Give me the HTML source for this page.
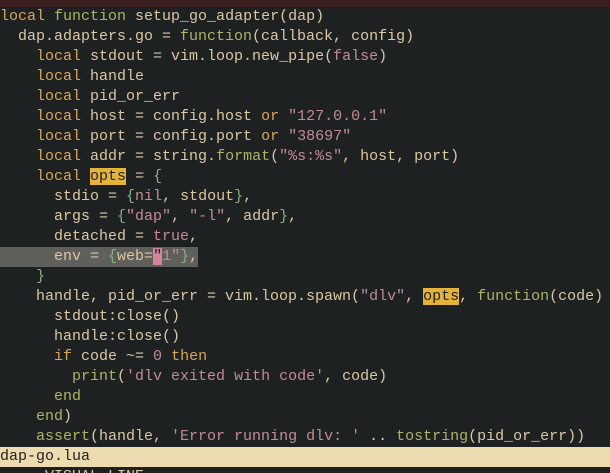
<!DOCTYPE html>
<html><head><meta charset="utf-8"><style>
html,body{margin:0;padding:0;width:610px;height:473px;overflow:hidden;background:#1e2122;}
.top{height:7px;background:#3b1f1f;}
pre{margin:0;font-family:"Liberation Mono",monospace;font-size:15px;line-height:20px;color:#ddc7a1;}
.l{height:20px;white-space:pre;}
.k{color:#d8a657}.f{color:#a9b665}.s{color:#c68a93}.g{color:#89b482}
.hl{background:#e5b33a;color:#1e2122}
.sel{background:#5f5f5b;display:inline-block}
.cur{background:#d3869b;color:#1e2122}
.st{background:#ecdcb0;color:#1e2122;height:20px;}
.bot{color:#ddc7a1}
</style></head><body>
<div class="top"></div>
<pre><div class="l"><span class="k">local</span> <span class="f">function</span> setup_go_adapter(dap)</div><div class="l">  dap.adapters.go = <span class="f">function</span>(callback, config)</div><div class="l">    <span class="k">local</span> stdout = vim.loop.new_pipe(<span class="s">false</span>)</div><div class="l">    <span class="k">local</span> handle</div><div class="l">    <span class="k">local</span> pid_or_err</div><div class="l">    <span class="k">local</span> host = config.host <span class="k">or</span> <span class="s">"127.0.0.1"</span></div><div class="l">    <span class="k">local</span> port = config.port <span class="k">or</span> <span class="s">"38697"</span></div><div class="l">    <span class="k">local</span> addr = string.<span class="f">format</span>(<span class="s">"%s:%s"</span>, host, port)</div><div class="l">    <span class="k">local</span> <span class="hl">opts</span> = <span class="g">{</span></div><div class="l">      stdio = <span class="g">{</span><span class="s">nil</span>, stdout<span class="g">}</span>,</div><div class="l">      args = <span class="g">{</span><span class="s">"dap"</span>, <span class="s">"-l"</span>, addr<span class="g">}</span>,</div><div class="l">      detached = <span class="s">true</span>,</div><div class="l"><span class="sel">      env = <span class="g">{</span>web=<span class="cur">"</span><span class="s">1"</span><span class="g">}</span>,</span></div><div class="l">    <span class="g">}</span></div><div class="l">    handle, pid_or_err = vim.loop.spawn(<span class="s">"dlv"</span>, <span class="hl">opts</span>, <span class="f">function</span>(code)</div><div class="l">      stdout:close()</div><div class="l">      handle:close()</div><div class="l">      <span class="k">if</span> code ~= <span class="s">0</span> <span class="k">then</span></div><div class="l">        <span class="f">print</span>(<span class="s">'dlv exited with code'</span>, code)</div><div class="l">      <span class="f">end</span></div><div class="l">    <span class="f">end</span>)</div><div class="l">    <span class="f">assert</span>(handle, <span class="s">'Error running dlv: '</span> .. <span class="f">tostring</span>(pid_or_err))</div><div class="l st">dap-go.lua</div><div class="l bot">  -- VISUAL LINE --</div></pre>
</body></html>
